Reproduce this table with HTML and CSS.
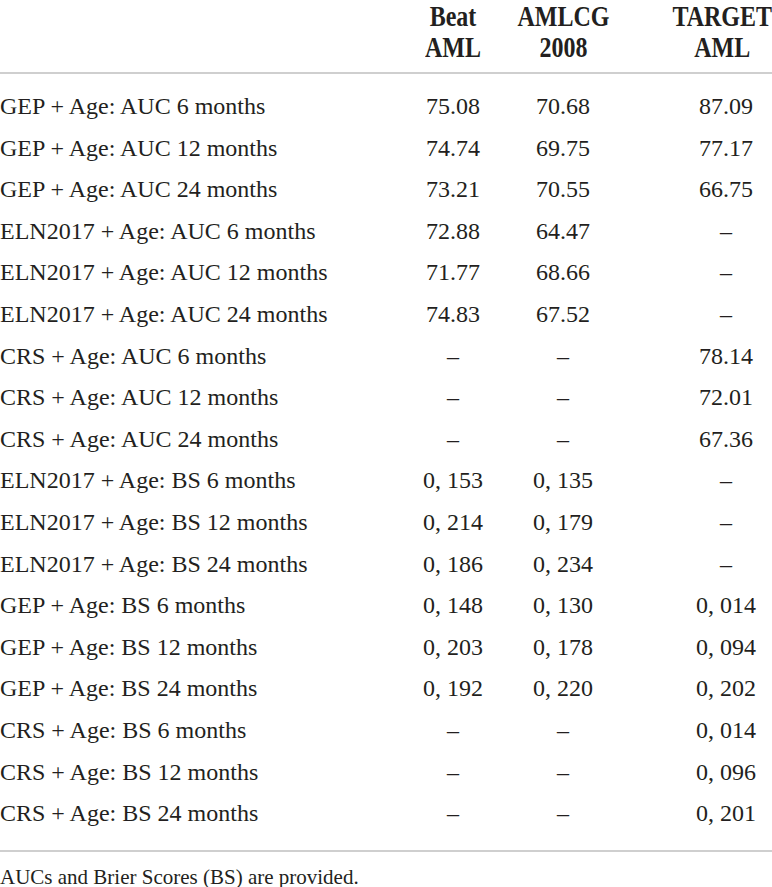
FILE: index.html
```html
<!DOCTYPE html>
<html>
<head>
    <title>AUC and Brier Scores</title>
    <link rel="stylesheet" href="styles.css">
</head>
<body>
    <table class="scores">
        <colgroup>
            <col class="col-label">
            <col class="col-num">
            <col class="col-num">
            <col class="col-last">
        </colgroup>
        <thead>
            <tr>
                <th></th>
                <th><span class="squeeze">Beat<br>AML</span></th>
                <th><span class="squeeze">AMLCG<br>2008</span></th>
                <th class="last"><span class="squeeze">TARGET<br>AML</span></th>
            </tr>
        </thead>
        <tbody>
            <tr class="first"><td>GEP + Age: AUC 6 months</td><td>75.08</td><td>70.68</td><td class="last">87.09</td></tr>
            <tr><td>GEP + Age: AUC 12 months</td><td>74.74</td><td>69.75</td><td class="last">77.17</td></tr>
            <tr><td>GEP + Age: AUC 24 months</td><td>73.21</td><td>70.55</td><td class="last">66.75</td></tr>
            <tr><td>ELN2017 + Age: AUC 6 months</td><td>72.88</td><td>64.47</td><td class="last">–</td></tr>
            <tr><td>ELN2017 + Age: AUC 12 months</td><td>71.77</td><td>68.66</td><td class="last">–</td></tr>
            <tr><td>ELN2017 + Age: AUC 24 months</td><td>74.83</td><td>67.52</td><td class="last">–</td></tr>
            <tr><td>CRS + Age: AUC 6 months</td><td>–</td><td>–</td><td class="last">78.14</td></tr>
            <tr><td>CRS + Age: AUC 12 months</td><td>–</td><td>–</td><td class="last">72.01</td></tr>
            <tr><td>CRS + Age: AUC 24 months</td><td>–</td><td>–</td><td class="last">67.36</td></tr>
            <tr><td>ELN2017 + Age: BS 6 months</td><td>0, 153</td><td>0, 135</td><td class="last">–</td></tr>
            <tr><td>ELN2017 + Age: BS 12 months</td><td>0, 214</td><td>0, 179</td><td class="last">–</td></tr>
            <tr><td>ELN2017 + Age: BS 24 months</td><td>0, 186</td><td>0, 234</td><td class="last">–</td></tr>
            <tr><td>GEP + Age: BS 6 months</td><td>0, 148</td><td>0, 130</td><td class="last">0, 014</td></tr>
            <tr><td>GEP + Age: BS 12 months</td><td>0, 203</td><td>0, 178</td><td class="last">0, 094</td></tr>
            <tr><td>GEP + Age: BS 24 months</td><td>0, 192</td><td>0, 220</td><td class="last">0, 202</td></tr>
            <tr><td>CRS + Age: BS 6 months</td><td>–</td><td>–</td><td class="last">0, 014</td></tr>
            <tr><td>CRS + Age: BS 12 months</td><td>–</td><td>–</td><td class="last">0, 096</td></tr>
            <tr class="end"><td>CRS + Age: BS 24 months</td><td>–</td><td>–</td><td class="last">0, 201</td></tr>
        </tbody>
    </table>
    <p class="note">AUCs and Brier Scores (BS) are provided.</p>
</body>
</html>
```

FILE: styles.css
```css
body { margin: 0; background: #fff; color: #231f20; font-family: "Liberation Serif", "Times New Roman", serif; font-size: 24px; }
.scores { width: 772px; border-collapse: collapse; table-layout: fixed; }
.col-label { width: 398px; }
.col-num { width: 110px; }
.col-last { width: 154px; }
th { font-weight: bold; font-size: 30px; line-height: 31px; height: 61px; vertical-align: bottom; text-align: center; padding: 0 0 10px; border-bottom: 2px solid #cfcfcf; }
th.last { padding-left: 54px; }
.squeeze { display: inline-block; margin: 0 -30px; transform: scaleX(0.8); }
td { padding: 0; height: 41.6px; line-height: 41.6px; text-align: center; white-space: nowrap; }
td:first-child { text-align: left; }
td.last { padding-left: 62px; }
tr.first td { padding-top: 12px; }
tr.end td { padding-bottom: 15px; border-bottom: 2px solid #cfcfcf; }
.note { margin: 15px 0 0; font-size: 21px; line-height: 20px; }
```
